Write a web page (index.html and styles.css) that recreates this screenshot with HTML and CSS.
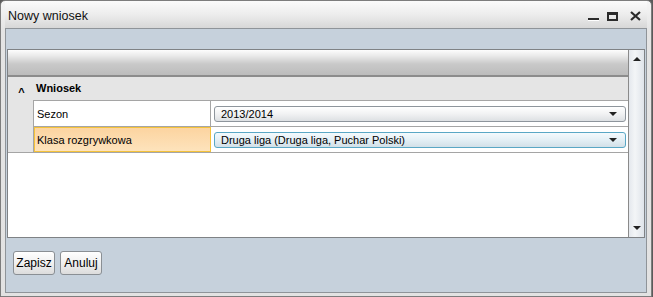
FILE: index.html
```
<!DOCTYPE html>
<html>
	<head>
	<meta charset="utf-8">
	<link rel="stylesheet" href="styles.css">
	</head>
	<body>
		<div class="window">
			<div class="titlebar">
				<span class="title">Nowy wniosek</span>
				<div class="controls">
					<span class="ctl ctl-min"></span>
					<span class="ctl ctl-max"></span>
					<svg class="ctl-close" width="11" height="10" viewBox="0 0 11 10">
						<path d="M1 1 L10 9 M10 1 L1 9" stroke="#2b2b2b" stroke-width="2.2" fill="none"/>
					</svg>
				</div>
			</div>
			<div class="client">
				<div class="panel">
					<div class="grid">
						<div class="head"></div>
						<div class="group">
							<div class="group-title">
								<span class="caret">^</span>
								<b>Wniosek</b>
							</div>
							<div class="rows">
								<div class="row">
									<div class="label">Sezon</div>
									<div class="value">
										<div class="combo"><span>2013/2014</span><i class="arrow"></i></div>
									</div>
								</div>
								<div class="row">
									<div class="label selected">Klasa rozgrywkowa</div>
									<div class="value">
										<div class="combo focus"><span>Druga liga (Druga liga, Puchar Polski)</span><i class="arrow"></i></div>
									</div>
								</div>
							</div>
						</div>
						<div class="empty"></div>
					</div>
					<div class="scrollbar">
						<i class="up"></i>
						<i class="down"></i>
					</div>
				</div>
				<div class="buttons">
					<button class="btn">Zapisz</button>
					<button class="btn">Anuluj</button>
				</div>
			</div>
		</div>
	</body>
</html>
```

FILE: styles.css
```
	html, body {
		margin: 0;
		padding: 0;
		width: 653px;
		height: 297px;
		overflow: hidden;
		background-color: #5a5a5a;
		font-family: "Liberation Sans", Arial, sans-serif;
		font-size: 11px;
		color: #000;
	}

	.window {
		box-sizing: border-box;
		width: 652px;
		height: 297px;
		border: 1px solid #7d7d7d;
		border-radius: 5px 5px 0 0;
		background: linear-gradient(to bottom, #f6f6f6, #e4e4e4 30px, #e2e2e2);
		padding: 0 4px 3px 4px;
		display: flex;
		flex-direction: column;
	}

	.titlebar {
		height: 27px;
		display: flex;
		align-items: center;
		justify-content: space-between;
		padding: 0 0 0 3px;
		background: linear-gradient(to bottom, #fbfbfb, #ececec 14px, #d7d7d7);
	}

	.title {
		font-size: 12.5px;
		color: #111;
		margin-top: 3px;
	}

	.controls {
		display: flex;
		align-items: center;
		gap: 8px;
		margin-right: 6px;
		margin-top: 3px;
	}

	.ctl {
		display: block;
		box-sizing: border-box;
	}

	.ctl-min {
		width: 11px;
		height: 3px;
		background: #2b2b2b;
		border-bottom: 1px solid #fff;
		margin-top: 6px;
	}

	.ctl-max {
		width: 11px;
		height: 9px;
		border: 2px solid #2b2b2b;
		border-top-width: 3px;
		margin-right: 4px;
	}

	.client {
		flex: 1;
		border: 1px solid #8f9499;
		background-color: #c6d1dc;
		display: flex;
		flex-direction: column;
		padding: 20px 1px 0 1px;
	}

	.panel {
		height: 189px;
		box-sizing: border-box;
		border: 1px solid #7f8285;
		background-color: #fff;
		display: flex;
	}

	.grid {
		flex: 1;
		display: flex;
		flex-direction: column;
		border-right: 1px solid #8a8a8a;
	}

	.head {
		height: 25px;
		border-bottom: 2px solid #8c8c8c;
		background: linear-gradient(to bottom, #fdfdfd, #e9e9e9 6px, #c9c9c9 14px, #bcbcbc);
	}

	.group {
		background-color: #e5e5e5;
		border-bottom: 1px solid #a5a5a5;
	}

	.group-title {
		height: 23px;
		display: flex;
		align-items: center;
	}

	.caret {
		width: 27px;
		text-align: center;
		font-weight: bold;
		font-size: 11px;
		margin-top: 6px;
		margin-left: 0;
	}

	.group-title b {
		font-size: 11px;
		margin-top: -2px;
		margin-left: 1px;
	}

	.rows {
		margin-left: 25px;
		background-color: #fff;
		border-left: 1px solid #a5a5a5;
	}

	.row {
		display: flex;
		height: 25px;
		border-top: 1px solid #a5a5a5;
	}

	.label {
		width: 177px;
		box-sizing: border-box;
		border-right: 1px solid #a5a5a5;
		padding-left: 3px;
		display: flex;
		align-items: center;
	}

	.label.selected {
		background: linear-gradient(to bottom, #fcd4a0, #fde3bc);
		border: 1px solid #f4c23a;
		padding-left: 2px;
	}

	.value {
		flex: 1;
		padding: 0 2px 0 3px;
		display: flex;
		align-items: center;
	}

	.combo {
		flex: 1;
		height: 16px;
		box-sizing: border-box;
		border: 1px solid #8e959c;
		border-radius: 3px;
		background: linear-gradient(to bottom, #ffffff, #f1f2f3 50%, #dde0e3);
		display: flex;
		align-items: center;
		justify-content: space-between;
		padding: 0 8px 0 6px;
		margin-top: 1px;
	}

	.combo.focus {
		border-color: #5aa7c5;
		background: linear-gradient(to bottom, #f4fafd, #e4eff5 50%, #d2e0e8);
	}

	.arrow {
		width: 0;
		height: 0;
		border-left: 4px solid transparent;
		border-right: 4px solid transparent;
		border-top: 4px solid #222;
	}

	.empty {
		flex: 1;
	}

	.scrollbar {
		width: 15px;
		background: linear-gradient(to right, #e4e8ed, #f3f5f7 40%, #dfe4ea);
		display: flex;
		flex-direction: column;
		justify-content: space-between;
		align-items: center;
		padding: 7px 0 7px 0;
	}

	.up {
		width: 0;
		height: 0;
		border-left: 4px solid transparent;
		border-right: 4px solid transparent;
		border-bottom: 4px solid #222;
	}

	.down {
		width: 0;
		height: 0;
		border-left: 4px solid transparent;
		border-right: 4px solid transparent;
		border-top: 4px solid #222;
	}

	.buttons {
		display: flex;
		gap: 5px;
		padding: 13px 0 0 6px;
	}

	.btn {
		font-family: "Liberation Sans", Arial, sans-serif;
		font-size: 12px;
		height: 24px;
		width: 42px;
		padding: 0;
		color: #000;
		border: 1px solid #8a8f94;
		border-radius: 3px;
		background: linear-gradient(to bottom, #ffffff, #f0f0f0 50%, #dcdcdc);
	}
```
